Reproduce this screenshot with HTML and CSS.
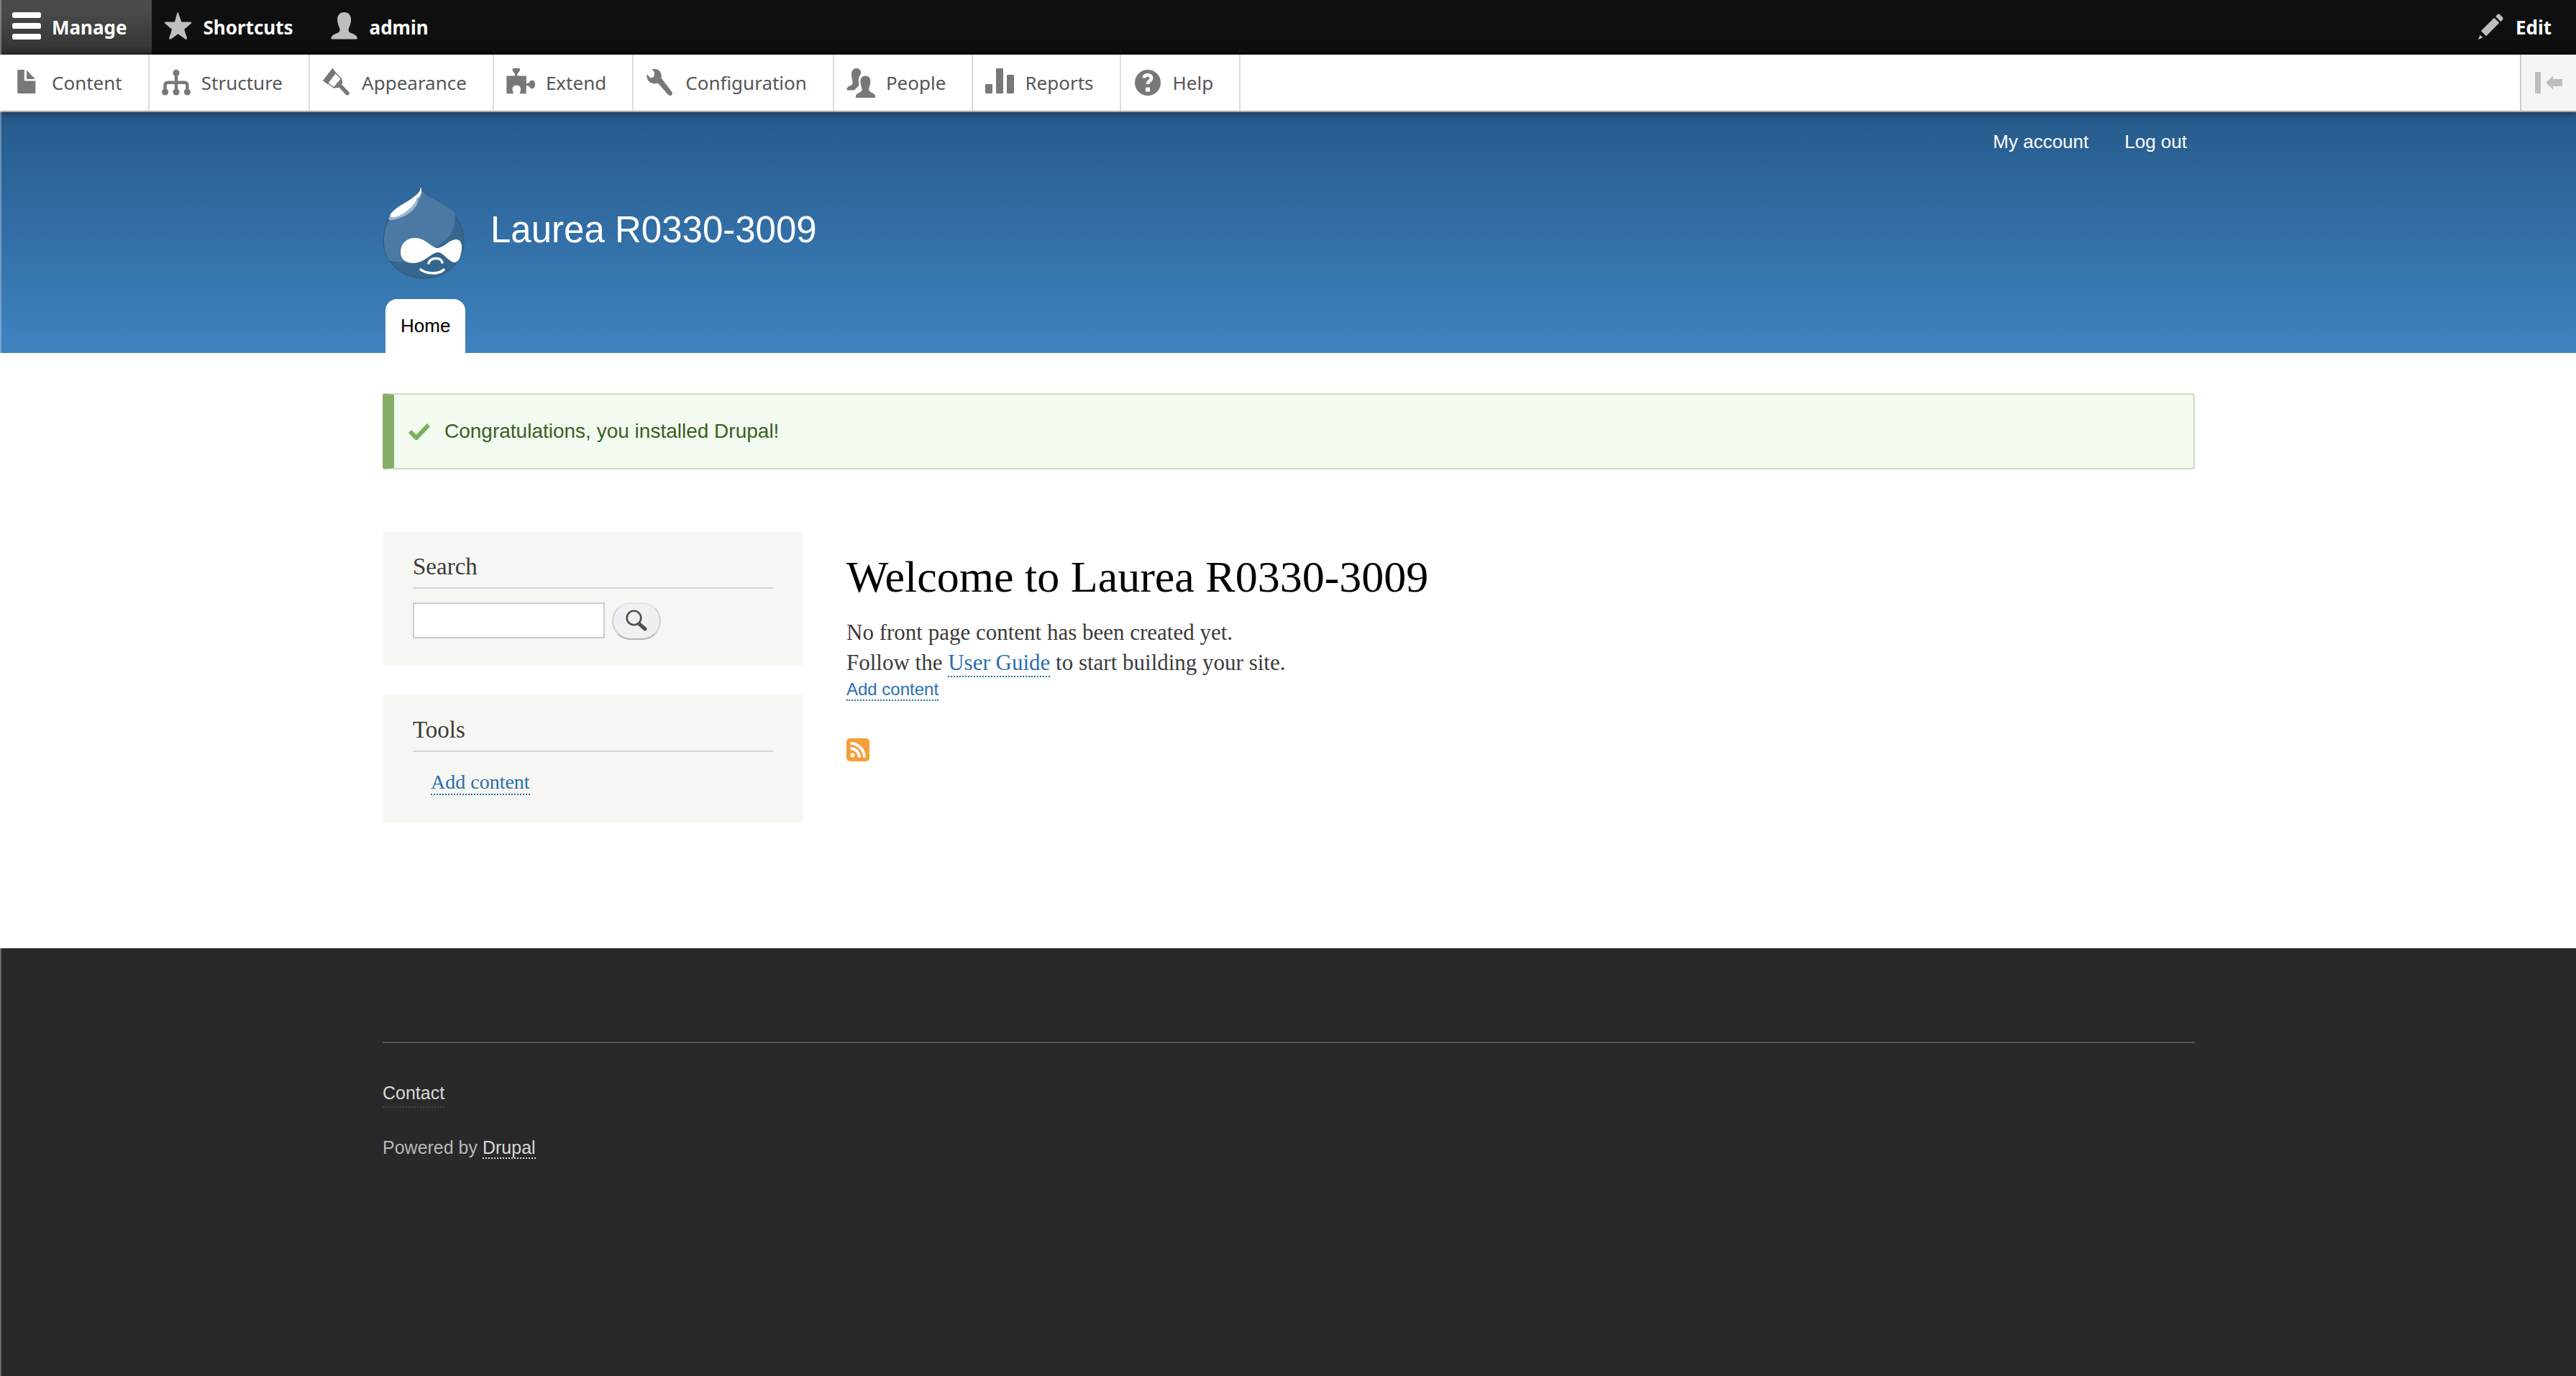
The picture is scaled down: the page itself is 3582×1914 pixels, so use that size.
FILE: index.html
```html
<!DOCTYPE html>
<html lang="en">
<head>
<meta charset="utf-8">
<title>Welcome to Laurea R0330-3009</title>
<link rel="stylesheet" href="styles.css">
</head>
<body>
<nav class="bar" aria-label="Toolbar">
  <button class="tab tab-active" type="button">
    <svg class="icon" viewBox="0 0 20 20" fill="#fff"><rect y="-.5" width="20" height="4" rx="1.400"/><rect y="7" width="20" height="4" rx="1.400"/><rect y="14.500" width="20" height="4" rx="1.400"/></svg>
    Manage</button>
  <button class="tab" type="button">
    <svg class="icon" viewBox="-.3 1 21 21" fill="#bebebe"><path d="M10 .5l2.500 7.100h7q.5.6 0 1.200l-5 4.200 2.100 6.600q-.6 1-1.300.5L10 16.300l-5.300 3.800q-.8.400-1.300-.5l2.100-6.600-5-4.200q-.5-.6 0-1.200h7L9.400.9q.3-.7.600-.4z"/></svg>
    Shortcuts</button>
  <button class="tab" type="button">
    <svg class="icon" viewBox="-.3 1 21 21" fill="#bebebe"><path d="M10 .5c3 0 5 1.900 5 5.500 0 2.500-1 4.500-1.600 6.200-.6 2 .1 3 1.600 3.500 2.300.8 4.500 1.900 4.500 3.700 0 .6-.2.800-.8.800H1.300c-.6 0-.8-.2-.8-.8 0-1.800 2.200-2.900 4.500-3.700 1.500-.5 2.200-1.500 1.600-3.500C6 10.500 5 8.500 5 6 5 2.400 7 .5 10 .5z"/></svg>
    admin</button>
  <button class="tab tab-edit" type="button">
    <svg class="icon" viewBox="-1 -.5 22.500 22.500" fill="#bebebe"><path d="M.8 19.900l1.500-3.100 2 2-3.100 1.400q-.5.100-.4-.3zM2.900 13.600L13.200 3.300l4 4L6.900 17.600zM14.300 2.200l1.400-1.400q1-.8 2 0l2.100 2.100q.9 1 0 2l-1.500 1.500z"/></svg>
    Edit</button>
</nav>
<nav class="tray" aria-label="Administration menu">
  <a class="item" href="#"><svg class="icon" viewBox="0 0 20 20" fill="#787878"><path d="M4.200 1h4.200v7.800h7.800v8.100q0 .6-.6.600H4.200q-.6 0-.6-.6V1.600q0-.6.6-.6zM10 1.200l6 6.300h-6z"/></svg>Content</a>
  <a class="item" href="#"><svg class="icon" viewBox="0 0 20 20" fill="#787878"><circle cx="10" cy="3.200" r="2.300"/><circle cx="2.300" cy="16.500" r="2.300"/><circle cx="10" cy="16.500" r="2.300"/><circle cx="17.700" cy="16.500" r="2.300"/><path d="M2.300 16v-4.200q0-1.900 1.900-1.900h11.600q1.900 0 1.900 1.900V16M10 3v13" fill="none" stroke="#787878" stroke-width="2.200"/></svg>Structure</a>
  <a class="item" href="#"><svg class="icon" viewBox="0 0 21 21"><path fill="#787878" d="M.8 8.500L7.200.3q.5-.4.900.1l2 3-6.200 8.200-3-2.200q-.5-.4-.1-.9z"/><path d="M8.800 2.500l5.200 5.300-5.400 6.400-6.200-4.700" fill="none" stroke="#787878" stroke-width=".8"/><path d="M12 11.500l6.300 6.700" stroke="#787878" stroke-width="3" stroke-linecap="round"/><path fill="#787878" d="M8.500 14.400L14.200 7.600l.7 3.300-2.800 3.300z"/></svg>Appearance</a>
  <a class="item" href="#"><svg class="icon" viewBox="0 0 20 20" fill="#787878"><path d="M.8 5.200h5.200q.4-.9-.3-1.600L4.400 1.800V0h5v1.800L7.900 3.600q-.6.700-.2 1.600h6.200v5q1.200.9 2-.4 1-1.500 2.400-1.500 1.700.8 1.700 3t-1.700 3q-1.400 0-2.400-1.500-.8-1.300-2-.4v5.200H9.600q-.3-1 .2-1.600 1-4-2.600-4.300-4 .3-2.600 4.300.5.600.2 1.600H.8q-.6 0-.6-.6V5.800q0-.6.600-.6z"/></svg>Extend</a>
  <a class="item" href="#"><svg class="icon" viewBox="0 0 21 21" fill="#787878"><path d="M.8 4.200l2.700 3L6 6.200l.3-3L4.600.5C9 0 12 2.300 11.400 7.200l7.600 10q.9 1.300-.2 2.300t-2.500-.2L8.800 10.700C5 12.200 0 10 .8 4.200z"/></svg>Configuration</a>
  <a class="item" href="#"><svg class="icon" viewBox="0 0 20 20" fill="#787878"><path d="M7 0c2.100 0 3.200 1.400 3 3.700C9.300 5 8.200 7 8.400 9c.2 1.800.6 2.800-.5 3.900-.8.800-1.700 1.300-2.400 2.400H.8C.2 15.300 0 13.800 1 13c1.300-1 3.200-1 3.300-2.600C4.400 8.800 3.500 6.600 3.500 4 3.500 1.500 5 0 7 0z"/><path d="M13.200 5.200c2.200 0 3.500 1.400 3.500 4 0 2-1 3.700-1.100 5.500-.1 2.500 4.500 2 4.500 5 0 .6-.2.800-.8.800H7.200c-.6 0-.8-.2-.8-.8 0-3 4.500-2.500 4.400-5-.1-1.800-1.100-3.500-1.100-5.500 0-2.600 1.300-4 3.500-4z"/></svg>People</a>
  <a class="item" href="#"><svg class="icon" viewBox="0 1 20 20" fill="#787878"><rect y="12" width="5" height="6.500" rx=".6"/><rect x="7.500" y="1" width="5" height="17.500" rx=".6"/><rect x="15" y="5.500" width="5" height="13" rx=".6"/></svg>Reports</a>
  <a class="item" href="#"><svg class="icon" viewBox="0 1 20 20"><circle cx="10" cy="11" r="9" fill="#787878"/><path d="M7.200 7.800C7.500 4.800 12.900 5 12.500 8c-.2 1.800-2.500 1.800-2.500 4" fill="none" stroke="#fff" stroke-width="2.400"/><rect x="8.500" y="14.300" width="3" height="3" rx=".6" fill="#fff"/></svg>Help</a>
  <button class="toggle" type="button" aria-label="Vertical orientation"><svg class="icon" viewBox="0 0 20 20" fill="#bebebe"><path d="M.5 2.500h4v15h-4zM8 10l5-4.700v2.200h6.500v5H13v2.200z"/></svg></button>
</nav>
<header class="header">
  <div class="wrap">
    <nav class="account" aria-label="User account menu"><a href="#">My account</a><a href="#">Log out</a></nav>
    <a class="brand" href="#">
      <svg class="logo" viewBox="0 0 114 130">
        <path d="M53 1c2 8 12 15 20 19 24 12 40 33 40 57 0 30-25 52-56 52S1 105 1 76c0-25 16-41 34-54C45 16 52 10 53 1z" fill="#35668f" stroke="#3b5b7c" stroke-width="1.500"/>
        <path d="M53 3c3 8 12 13 20 17 13 7 22 13 27 18 3 18-5 38-28 48l-30 20c-12 1-26 1-33-2C4 96 2 87 2 76c0-25 16-41 34-54C45 16 52 11 53 3z" fill="#4a79a4"/>
        <path d="M53 2c2 7 1 13-3 17-1 14-20 27-37 29-4 1-5-1-4-4 4-9 14-15 26-22C45 16 52 11 53 2z" fill="#9db8d0"/>
        <path d="M53 2c2 7 1 12-6 16 0 9-20 25-31 26-4 1-6-1-5-4 4-6 13-12 24-18C46 14 53 10 53 2z" fill="#fff"/>
        <path d="M25 93c0-13 9-20 20-20 14 0 22 12 30 14 9 1 16-11 27-12 6 0 9 6 8 14-1 9-4 18-10 18-8 0-15-14-23-14-9 0-19 15-34 15-11 0-18-6-18-15z" fill="#fff"/>
        <path d="M64 108c2-8 17-9 19-1M53 117c7 6 26 7 32 0" fill="none" stroke="#fff" stroke-width="3.500" stroke-linecap="round"/>
      </svg>
      <span class="site-name">Laurea R0330-3009</span>
    </a>
    <nav class="main-menu" aria-label="Main navigation"><a class="menu-tab" href="#">Home</a></nav>
  </div>
</header>
<main class="wrap content">
  <div class="message" role="status">
    <svg class="check" viewBox="0 0 30 24"><path d="M2 12l9 9L28 3" fill="none" stroke="#7ab05c" stroke-width="6"/></svg>
    Congratulations, you installed Drupal!
  </div>
  <div class="columns">
    <aside class="sidebar">
      <section class="block">
        <h2 class="block-title">Search</h2>
        <form class="search">
          <input class="search-box" type="search" aria-label="Search">
          <button class="search-button" type="button" aria-label="Search"><svg class="glass" viewBox="0 0 30 30" fill="none" stroke="#505050"><circle cx="11.500" cy="11.500" r="9.800" stroke-width="2.600"/><path d="M19 20l8 7" stroke-width="5" stroke-linecap="round"/></svg></button>
        </form>
      </section>
      <section class="block">
        <h2 class="block-title">Tools</h2>
        <ul class="tools"><li><a class="link" href="#">Add content</a></li></ul>
      </section>
    </aside>
    <article class="article">
      <h1 class="title">Welcome to Laurea R0330-3009</h1>
      <p class="text">No front page content has been created yet.</p>
      <p class="text">Follow the <a class="link" href="#">User Guide</a> to start building your site.</p>
      <div class="action"><a class="link" href="#">Add content</a></div>
      <a class="feed" href="#" aria-label="Subscribe"><svg class="rss" viewBox="0 0 32 32"><rect width="32" height="32" rx="5" fill="#f59d38"/><circle cx="8.500" cy="23.500" r="3" fill="#fff"/><path d="M5.500 14A12.500 12.500 0 0 1 18 26.500M5.500 7A19.500 19.500 0 0 1 25 26.500" fill="none" stroke="#fff" stroke-width="4"/></svg></a>
    </article>
  </div>
</main>
<footer class="footer">
  <div class="wrap">
    <div class="footer-inner">
      <a class="contact" href="#">Contact</a>
      <p class="powered">Powered by <a class="powered-link" href="#">Drupal</a></p>
    </div>
  </div>
</footer>
</body>
</html>
```
FILE: styles.css
```css
* { box-sizing: border-box; }

html, body { min-height: 100%; }

body {
  margin: 0;
  min-height: 100vh;
  display: flex;
  flex-direction: column;
  background: #fff;
  color: #3b3b3b;
  font-family: "Liberation Sans", Arial, sans-serif;
  font-size: 26px;
}

/* thin light edge down the left of the window */
body::before {
  content: "";
  position: fixed;
  inset: 0 auto 0 0;
  width: 2px;
  background: rgba(255, 255, 255, 0.3);
  z-index: 5;
}

a { color: inherit; text-decoration: none; }
h1, h2, p, ul { margin: 0; padding: 0; font-weight: normal; }
button { font: inherit; margin: 0; }

/* Toolbar */
.bar {
  display: flex;
  height: 76px;
  background: #0f0f0f;
  font-family: "Noto Sans", sans-serif;
}
.tab {
  display: flex;
  align-items: center;
  gap: 15px;
  padding: 0 34px 0 17px;
  border: 0;
  background: none;
  color: #fff;
  font-weight: bold;
}
.tab-active { background: linear-gradient(#4a4a4a 20%, #333); }
.tab-edit { margin-left: auto; }
.icon { width: 40px; height: 40px; flex: none; overflow: visible; }

.tray {
  display: flex;
  height: 80px;
  position: relative;
  background: #fff;
  border-bottom: 2px solid #aaa;
  box-shadow: 0 0 12px rgba(0, 0, 0, 0.6);
  color: #565656;
  font-family: "Noto Sans", sans-serif;
}
.item {
  display: flex;
  align-items: center;
  gap: 15px;
  padding: 0 36px 0 17px;
  border-right: 2px solid #ddd;
}
.toggle {
  display: flex;
  align-items: center;
  justify-content: center;
  width: 78px;
  margin-left: auto;
  padding: 0;
  border: 0;
  border-left: 2px solid #ccc;
  background: #f5f5f5;
}

.wrap {
  width: 100%;
  max-width: 2580px;
  margin: 0 auto;
  padding: 0 29px 0 31px;
}

/* Header */
.header {
  background: linear-gradient(#265a8b, #3e83c0);
  color: #fff;
}
.account {
  display: flex;
  justify-content: flex-end;
  gap: 50px;
  padding: 26px 11px 0;
  line-height: 30px;
}
.brand {
  display: flex;
  gap: 36px;
  margin-top: 46px;
}
.logo { width: 114px; height: 130px; }
.site-name { padding-top: 32px; font-size: 51px; line-height: 60px; }
.main-menu { display: flex; margin-top: 28px; padding-left: 4px; }
.menu-tab {
  padding: 0 21px;
  border-radius: 16px 16px 0 0;
  background: #fff;
  color: #000;
  line-height: 75px;
  text-shadow: 0 2px 1px #eee;
}

/* Content */
.content { padding-top: 56px; padding-bottom: 174px; }
.message {
  display: flex;
  align-items: center;
  gap: 20px;
  min-height: 106px;
  padding: 0 20px;
  border: 2px solid #cbdfbd;
  border-left: 16px solid #84ae66;
  border-radius: 4px;
  background: #f3faef;
  color: #38601f;
  font-size: 28px;
}
.check { width: 30px; height: 24px; }

.columns {
  display: flex;
  gap: 60px;
  margin-top: 86px;
  font-family: "Liberation Serif", Georgia, serif;
}
.sidebar {
  display: flex;
  flex-direction: column;
  gap: 40px;
  flex: 0 0 585px;
}
.block {
  padding: 28px 40px 34px;
  border: 2px solid #f9f9f9;
  background: #f6f6f2;
}
.block-title {
  padding-bottom: 10px;
  border-bottom: 2px solid #d6d6d6;
  font-size: 33px;
  line-height: 38px;
  text-shadow: 0 2px 0 #fff;
}
.search { display: flex; gap: 10px; padding-top: 19px; }
.search-box {
  width: 267px;
  height: 50px;
  border: 2px solid #ccc;
  background: #fff;
  font-size: 26px;
}
.search-button {
  display: flex;
  align-items: center;
  justify-content: center;
  width: 68px;
  height: 52px;
  padding: 0 0 2px;
  border: 2px solid;
  border-color: #e4e4e4 #d2d2d2 #b4b4b4;
  border-radius: 26px;
  background: #f0f0f0;
}
.glass { width: 30px; height: 30px; }
.tools {
  list-style: none;
  padding: 28px 0 7px 25px;
  font-size: 28px;
  line-height: 28px;
}
.link {
  padding-bottom: 1px;
  border-bottom: 2px dotted #2a6cab;
  color: #2a6eb0;
}
.title {
  padding: 30px 0 24px;
  color: #000;
  font-size: 62px;
  line-height: 66px;
}
.text { font-size: 31px; line-height: 42px; }
.action {
  font-family: "Liberation Sans", Arial, sans-serif;
  font-size: 24px;
  line-height: 32px;
}
.feed { display: block; width: 32px; margin-top: 52px; }
.rss { display: block; width: 32px; height: 32px; }

/* Footer */
.footer {
  flex: 1;
  padding: 130px 0;
  background: #292929;
  color: #b8b8b8;
  font-size: 25px;
}
.footer-inner { padding-top: 54px; border-top: 2px solid #555; }
.contact {
  display: inline-block;
  padding-bottom: 4px;
  border-bottom: 2px dotted #484848;
  color: #d8d8d8;
  line-height: 30px;
}
.powered { margin-top: 40px; line-height: 30px; }
.powered-link { border-bottom: 2px dotted #d8d8d8; color: #d8d8d8; }
```
